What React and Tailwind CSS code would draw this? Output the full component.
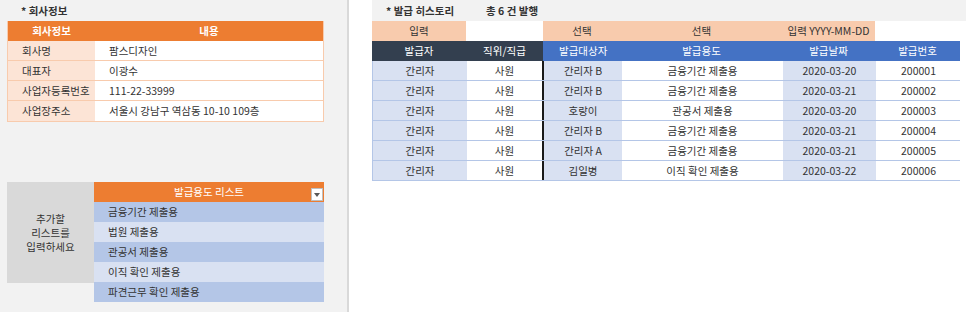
const companyRows = [
  ["회사명", "팜스디자인"],
  ["대표자", "이광수"],
  ["사업자등록번호", "111-22-33999"],
  ["사업장주소", "서울시 강남구 역삼동 10-10 109층"],
];

const purposes = ["금융기간 제출용", "법원 제출용", "관공서 제출용", "이직 확인 제출용", "파견근무 확인 제출용"];

const history = [
  ["간리자", "사원", "간리자 B", "금융기간 제출용", "2020-03-20", "200001"],
  ["간리자", "사원", "간리자 B", "금융기간 제출용", "2020-03-21", "200002"],
  ["간리자", "사원", "호랑이", "관공서 제출용", "2020-03-20", "200003"],
  ["간리자", "사원", "간리자 B", "금융기간 제출용", "2020-03-21", "200004"],
  ["간리자", "사원", "간리자 A", "금융기간 제출용", "2020-03-21", "200005"],
  ["간리자", "사원", "김일병", "이직 확인 제출용", "2020-03-22", "200006"],
];

const cols = "grid grid-cols-[94px_77px_78px_161px_93px_85px]";

function App() {
  return (
    <div
      className="flex h-[312px] w-[966px] overflow-hidden bg-white text-[10.5px] text-[#333]"
      style={{ fontFamily: '"Noto Sans CJK KR", "Noto Sans", sans-serif' }}
    >
      {/* left panel */}
      <div className="w-[349px] shrink-0 border-r-2 border-[#d9d9d9] bg-[#f2f2f2] pl-[7px]">
        <div className="flex h-[21px] items-center pl-[14px] font-bold">* 회사정보</div>
        <div className="w-[317px] border border-t-0 border-[#f8cbad]">
          <div className="grid h-[20px] grid-cols-[87px_1fr] bg-[#ed7d31] font-bold text-white">
            <div className="flex items-center justify-center">회사정보</div>
            <div className="flex items-center justify-center">내용</div>
          </div>
          {companyRows.map(([k, v], i) => (
            <div
              key={k}
              className={`grid h-[20px] grid-cols-[87px_1fr] ${i < companyRows.length - 1 ? "border-b border-[#f8cbad]" : ""}`}
            >
              <div className="flex items-center bg-[#fce4d6] pl-[14px]">{k}</div>
              <div className="flex items-center bg-white pl-[14px]">{v}</div>
            </div>
          ))}
        </div>

        <div className="mt-[60px] flex">
          <div className="flex h-[101px] w-[87px] flex-col items-center justify-center bg-[#d9d9d9] text-center">
            <div className="h-[14px] leading-[14px]">추가할</div>
            <div className="h-[14px] leading-[14px]">리스트를</div>
            <div className="h-[14px] leading-[14px]">입력하세요</div>
          </div>
          <div className="w-[230px]">
            <div className="relative flex h-[20px] items-center justify-center bg-[#ed7d31] text-white">
              발급용도 리스트
              <div className="absolute right-[1px] top-[6px] flex h-[13px] w-[12px] items-center justify-center border border-[#bfbfbf] bg-white">
                <svg width="6" height="4" viewBox="0 0 6 4">
                  <path d="M0 0h6L3 4z" fill="#595959" />
                </svg>
              </div>
            </div>
            {purposes.map((p, i) => (
              <div
                key={p}
                className={`flex h-[20px] items-center pl-[14px] ${i % 2 === 0 ? "bg-[#b4c6e7]" : "bg-[#d9e1f2]"}`}
              >
                {p}
              </div>
            ))}
          </div>
        </div>
      </div>

      {/* right panel */}
      <div className="flex-1 pl-[23px]">
        <div className="flex h-[21px] items-center bg-[#f2f2f2] font-bold">
          <span className="pl-[14px]">* 발급 히스토리</span>
          <span className="pl-[32px]">총 6 건 발행</span>
        </div>
        <div className={`${cols} h-[20px]`}>
          <div className="flex items-center justify-center bg-[#f8cbad]">입력</div>
          <div className="bg-white" />
          <div className="flex items-center justify-center bg-[#f8cbad]">선택</div>
          <div className="flex items-center justify-center bg-[#f8cbad]">선택</div>
          <div className="flex items-center justify-center bg-[#f8cbad]">입력 YYYY-MM-DD</div>
          <div className="bg-white" />
        </div>
        <div className={`${cols} h-[20px] text-white`}>
          <div className="flex items-center justify-center bg-[#333f4f]">발급자</div>
          <div className="flex items-center justify-center bg-[#333f4f]">직위/직급</div>
          <div className="flex items-center pl-[16px] bg-[#4472c4]">발급대상자</div>
          <div className="flex items-center justify-center bg-[#4472c4]">발급용도</div>
          <div className="flex items-center justify-center bg-[#4472c4]">발급날짜</div>
          <div className="flex items-center justify-center bg-[#4472c4]">발급번호</div>
        </div>
        <div className="w-[588px] border-l border-[#b4c6e7]">
          {history.map((r) => (
            <div key={r[5]} className={`${cols} h-[20px] border-b border-[#b4c6e7]`}>
              <div className="flex items-center justify-center bg-[#d9e1f2]">{r[0]}</div>
              <div className="flex items-center justify-center border-r-2 border-[#1a1a1a] bg-white">{r[1]}</div>
              <div className="flex items-center justify-center bg-[#d9e1f2]">{r[2]}</div>
              <div className="flex items-center justify-center bg-white">{r[3]}</div>
              <div className="flex items-center justify-center bg-[#d9e1f2]">{r[4]}</div>
              <div className="flex items-center justify-center bg-white">{r[5]}</div>
            </div>
          ))}
        </div>
      </div>
    </div>
  );
}

export default App;
